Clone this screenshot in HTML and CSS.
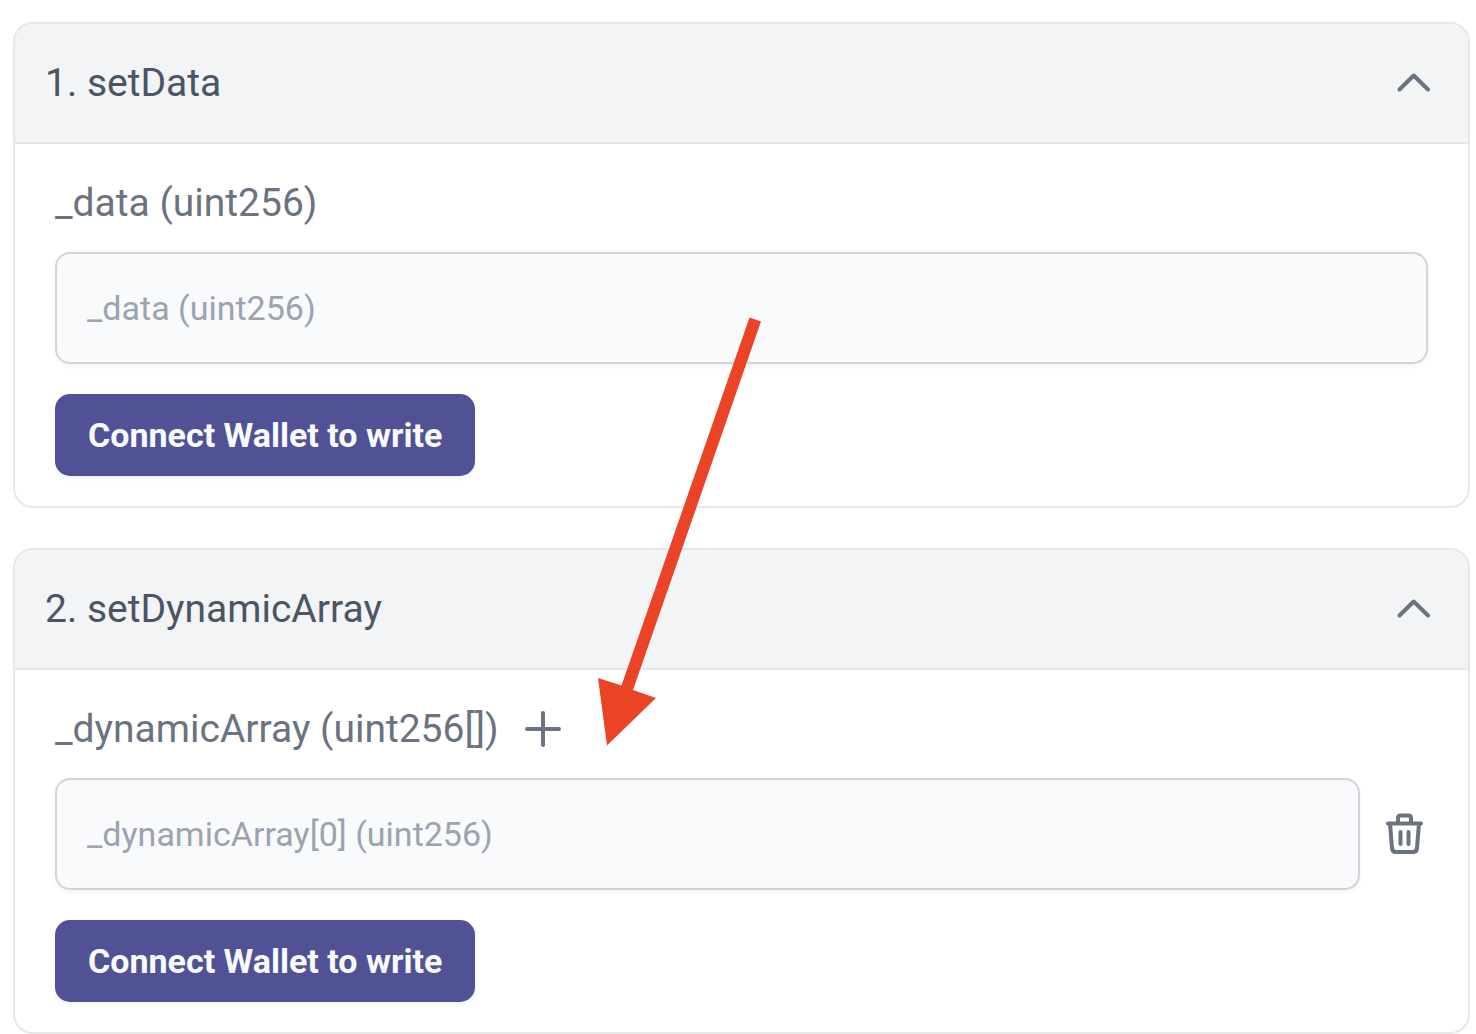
FILE: index.html
```html
<!DOCTYPE html>
<html lang="en">
<head>
  <meta charset="utf-8">
  <meta name="viewport" content="width=device-width, initial-scale=1">
  <title>Write Contract</title>
  <link rel="stylesheet" href="styles.css">
</head>
<body>
  <main class="functions">
    <section class="card">
      <h2 class="card-heading">
        <button class="card-toggle" type="button" aria-expanded="true" aria-controls="set-data">
          <span>1. setData</span>
          <svg class="chevron" viewBox="0 0 36 20" aria-hidden="true"><path d="M4.500 16.500 18.700 2.500 33 16.500"/></svg>
        </button>
      </h2>
      <form class="card-body" id="set-data">
        <div class="label-row">
          <label for="data">_data (uint256)</label>
        </div>
        <div class="input-row">
          <input class="field" id="data" type="text" placeholder="_data (uint256)">
        </div>
        <button class="connect" type="button">Connect Wallet to write</button>
      </form>
    </section>

    <section class="card">
      <h2 class="card-heading">
        <button class="card-toggle" type="button" aria-expanded="true" aria-controls="set-dynamic-array">
          <span>2. setDynamicArray</span>
          <svg class="chevron" viewBox="0 0 36 20" aria-hidden="true"><path d="M4.500 16.500 18.700 2.500 33 16.500"/></svg>
        </button>
      </h2>
      <form class="card-body" id="set-dynamic-array">
        <div class="label-row">
          <label for="item-0">_dynamicArray (uint256[])</label>
          <button class="icon-button" type="button" aria-label="Add item">
            <svg class="plus" viewBox="0 0 40 40" aria-hidden="true"><path d="M20 4v32M4 20h32"/></svg>
          </button>
        </div>
        <div class="input-row">
          <input class="field" id="item-0" type="text" placeholder="_dynamicArray[0] (uint256)">
          <button class="icon-button" type="button" aria-label="Remove item">
            <svg class="trash" viewBox="0 0 44 44" aria-hidden="true">
              <path d="M4 11.500h33M6 11.500 8 36q.3 4 4 4h17q3.700 0 4-4l2-24.500M14 11V6q0-2.500 2.500-2.500h8Q27 3.500 27 6v5M16.500 20v12M24.500 20v12"/>
            </svg>
          </button>
        </div>
        <button class="connect" type="button">Connect Wallet to write</button>
      </form>
    </section>

    <svg class="arrow" viewBox="0 0 160 430" aria-hidden="true">
      <path d="M152.500 1.500 164 5.500 36 374 59 382 10 429.500 1 362 24.500 369.500Z"/>
    </svg>
  </main>
</body>
</html>
```
FILE: styles.css
```css
*,
*::before,
*::after {
  box-sizing: border-box;
}

body {
  margin: 0;
  background: #fff;
  color: #6b7280;
  font-family: Roboto, "Liberation Sans", sans-serif;
}

button {
  border: 0;
  padding: 0;
  background: none;
  color: inherit;
  font: inherit;
  cursor: pointer;
}

.functions {
  position: relative;
  display: flex;
  flex-direction: column;
  gap: 40px;
  padding: 22px 6px 0 13px;
}

.card {
  border: 2px solid #e5e7eb;
  border-radius: 20px;
  overflow: hidden;
}

.card-heading {
  margin: 0;
  border-bottom: 2px solid #e5e7eb;
  font-size: 39px;
  font-weight: 400;
  line-height: 48px;
}

.card-toggle {
  display: flex;
  align-items: center;
  justify-content: space-between;
  width: 100%;
  padding: 35px 37px 35px 30px;
  background: #f3f4f6;
  color: #4b5563;
  text-align: left;
}

.card-body {
  display: flex;
  flex-direction: column;
  align-items: flex-start;
  padding: 35px 40px 30px;
}

.label-row {
  display: flex;
  align-items: center;
  gap: 24px;
  margin-bottom: 25px;
  font-size: 39px;
  line-height: 48px;
}

.input-row {
  display: flex;
  align-items: center;
  gap: 24px;
  width: 100%;
  margin-bottom: 30px;
}

.field {
  flex: 1;
  min-width: 0;
  height: 112px;
  border: 2px solid #d1d5db;
  border-radius: 15px;
  padding: 0 30px;
  background: #f9fafb;
  box-shadow: 0 2px 5px rgb(0 0 0 / 5%);
  color: #4b5563;
  font: 400 34px/50px Roboto, "Liberation Sans", sans-serif;
}

.field::placeholder {
  color: #9ca3af;
  opacity: 1;
}

.connect {
  border-radius: 15px;
  padding: 16px 33px;
  background: #505295;
  box-shadow: 0 2px 5px rgb(0 0 0 / 5%);
  color: #f9fafb;
  font-size: 34px;
  font-weight: 700;
  line-height: 50px;
}

.icon-button {
  display: flex;
}

.chevron,
.plus,
.trash {
  flex: none;
  fill: none;
  stroke: #6b7280;
  stroke-width: 4;
  stroke-linecap: round;
  stroke-linejoin: round;
}

.chevron {
  width: 36px;
  height: 20px;
}

.plus {
  width: 40px;
  height: 40px;
}

.trash {
  width: 44px;
  height: 44px;
}

/* Callout that points at the add button */
.arrow {
  position: absolute;
  top: 316px;
  left: 597px;
  width: 160px;
  height: 430px;
  overflow: visible;
  fill: #eb4326;
  pointer-events: none;
}
```
